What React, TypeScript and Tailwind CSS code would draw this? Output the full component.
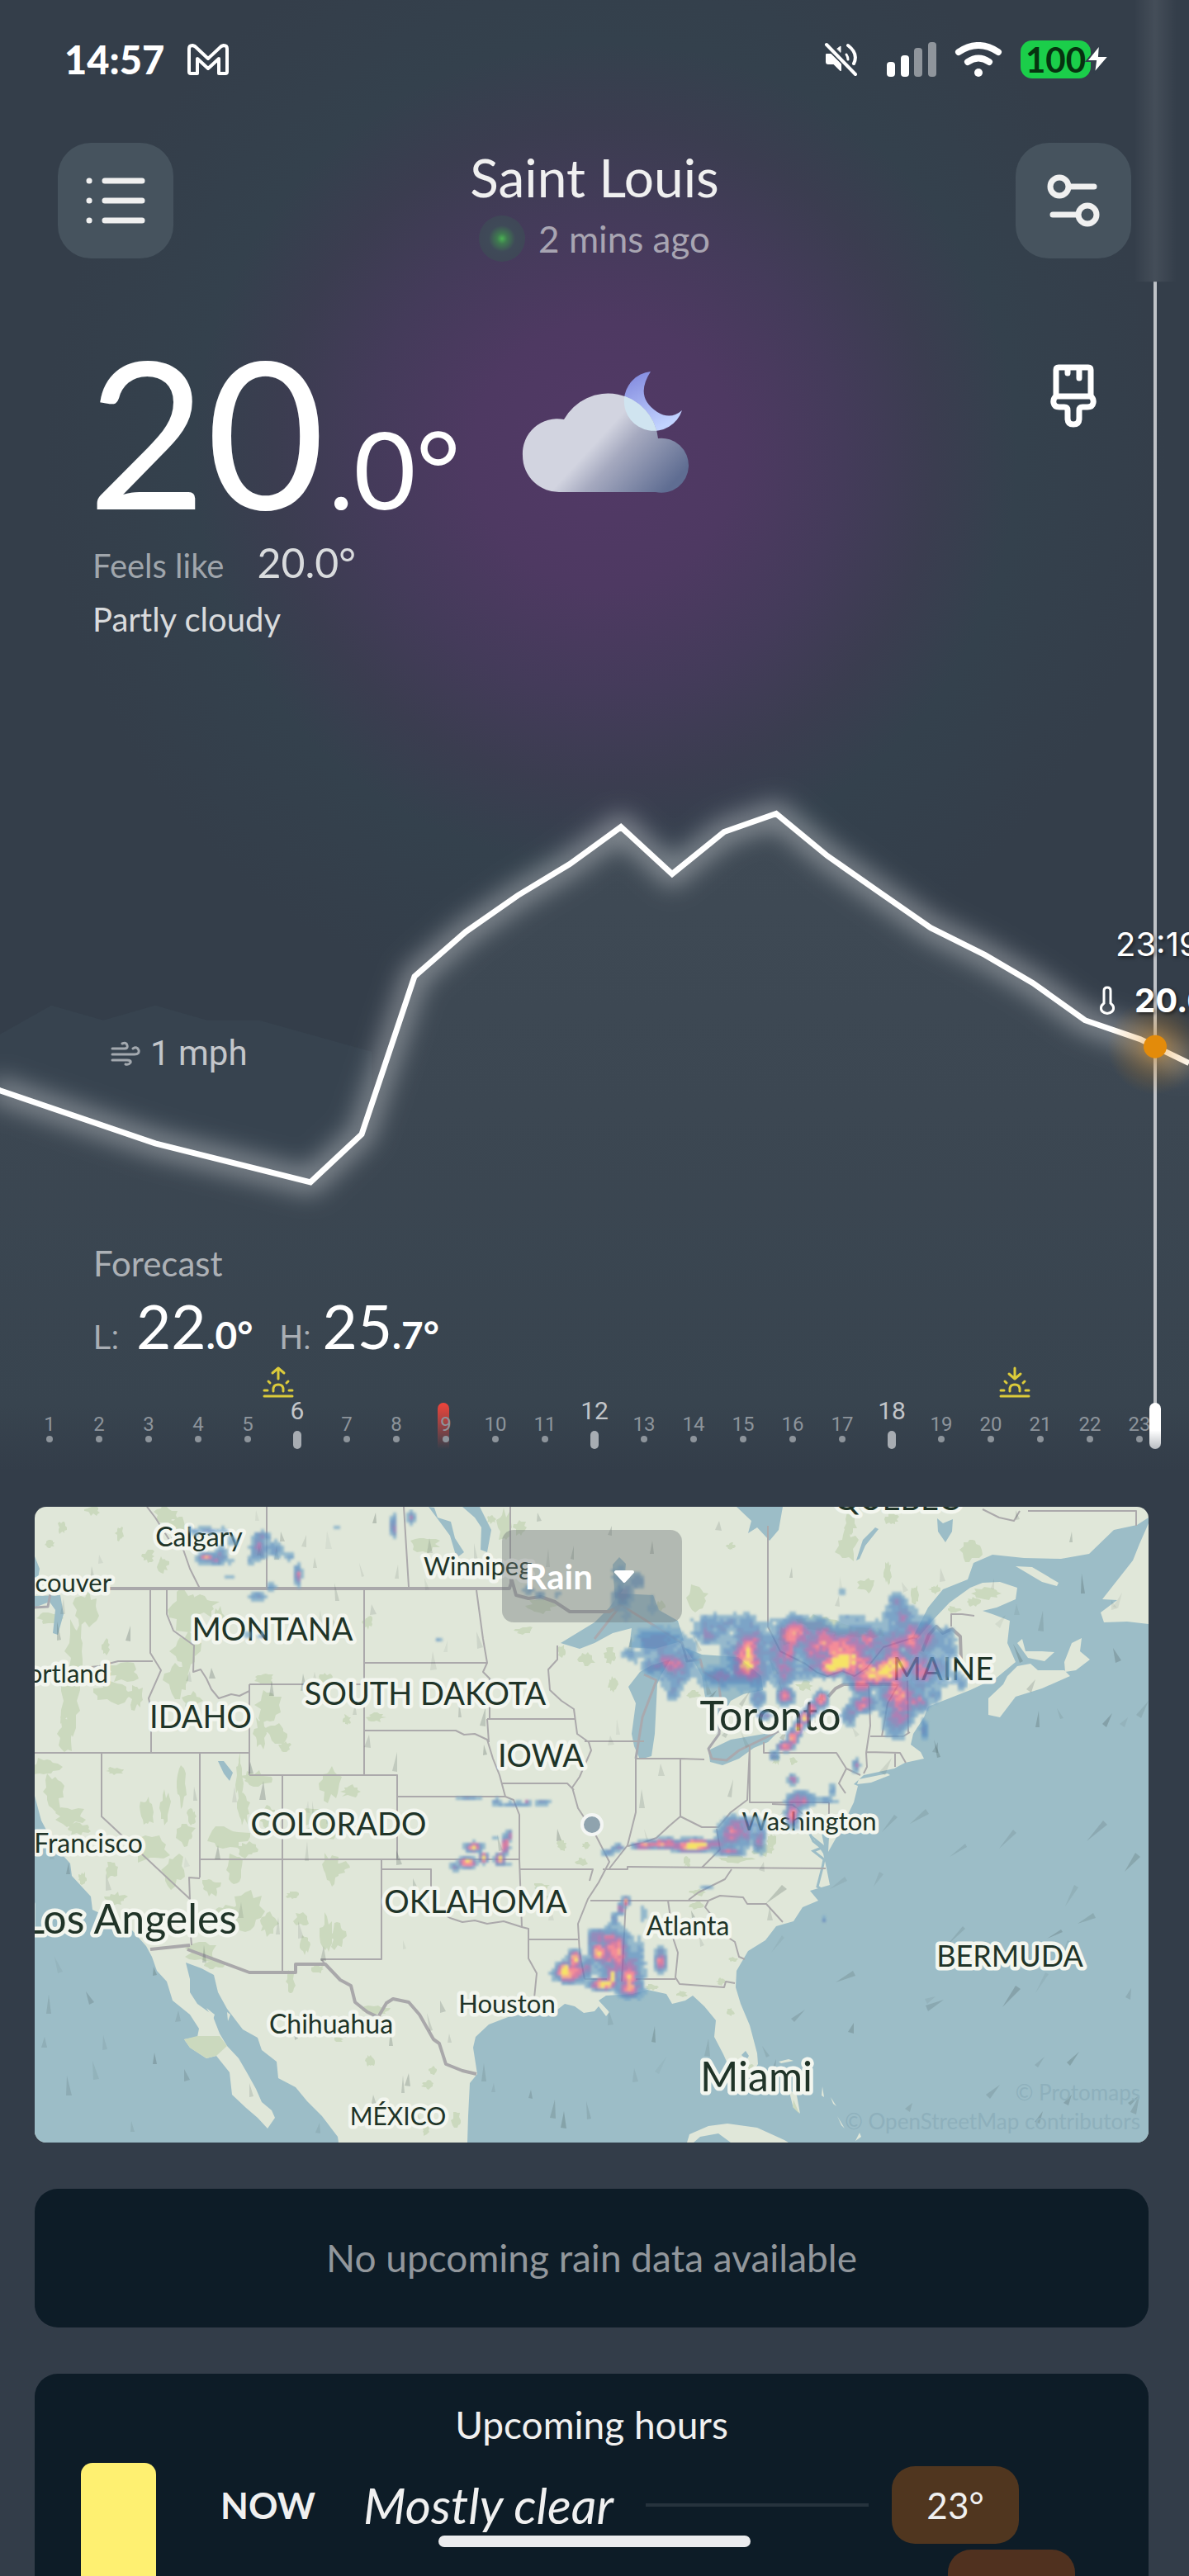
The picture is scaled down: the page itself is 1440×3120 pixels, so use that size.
import React from "react";

/* ---------- deterministic noise ---------- */
function seeded(seed: number) {
  let s = seed;
  return () => {
    s = (s * 1664525 + 1013904223) % 4294967296;
    return s / 4294967296;
  };
}

function hash(x: number, y: number) {
  const n = Math.sin(x * 127.1 + y * 311.7) * 43758.5453;
  return n - Math.floor(n);
}

function smoothNoise(x: number, y: number) {
  const x0 = Math.floor(x);
  const y0 = Math.floor(y);
  const fx = x - x0;
  const fy = y - y0;
  const top = hash(x0, y0) * (1 - fx) + hash(x0 + 1, y0) * fx;
  const bottom = hash(x0, y0 + 1) * (1 - fx) + hash(x0 + 1, y0 + 1) * fx;
  return top * (1 - fy) + bottom * fy;
}

type Five = [number, number, number, number, number];
type Four = [number, number, number, number];

/* ---------- rain radar ---------- */
const RAIN: Five[] = [
  [752, 1908, 16, 12, 0.4], [755, 1935, 14, 26, 0.42], [770, 1916, 12, 10, 0.4], [790, 1945, 7, 12, 0.35],
  [800, 1990, 34, 18, 0.45], [815, 2018, 18, 22, 0.66], [793, 2017, 14, 10, 0.6], [768, 2005, 15, 12, 0.36], [816, 2045, 8, 14, 0.45], [835, 2005, 12, 14, 0.45],
  [872, 1968, 34, 14, 0.45], [905, 2005, 22, 34, 0.8], [903, 2014, 14, 16, 0.85], [880, 2032, 34, 14, 0.48], [862, 1982, 10, 9, 0.62], [935, 2000, 12, 34, 0.42], [845, 1975, 12, 10, 0.4],
  [968, 1980, 26, 18, 0.72], [1000, 1992, 32, 20, 0.8], [1050, 1990, 48, 18, 0.78], [1030, 2013, 32, 13, 1.04], [1062, 2024, 30, 14, 1], [1010, 2018, 18, 10, 0.9], [1085, 2018, 18, 20, 0.88],
  [1112, 1988, 24, 22, 0.72], [1090, 1960, 20, 16, 0.48], [1086, 1940, 11, 12, 0.42], [1118, 2020, 26, 28, 0.62], [1088, 2055, 17, 34, 0.88], [1105, 1972, 16, 10, 0.6],
  [1046, 2064, 12, 10, 0.78], [1146, 1992, 16, 22, 0.42], [952, 2010, 14, 26, 0.72], [952, 2055, 9, 9, 0.85], [918, 2056, 9, 10, 0.6],
  [985, 2022, 22, 12, 0.5], [1119, 2095, 5, 12, 0.5], [1162, 2036, 12, 14, 0.4], [985, 1968, 22, 10, 0.45], [1032, 1960, 26, 4, 0.36], [1020, 1928, 7, 4, 0.36],
  [1110, 2062, 14, 10, 0.65], [1130, 2050, 10, 14, 0.45], [1028, 2078, 9, 12, 0.72], [1043, 2040, 10, 12, 0.8],
  [994, 2058, 7, 8, 0.9], [984, 2070, 6, 7, 0.98], [975, 2081, 5, 7, 1.05], [967, 2093, 5, 7, 1.1], [960, 2104, 5, 7, 1.1], [952, 2115, 8, 5, 0.95], [938, 2126, 6, 6, 0.5],
  [926, 2078, 6, 4, 0.85], [1037, 2138, 4, 8, 0.6], [960, 2156, 5, 5, 0.75],
  [970, 2180, 14, 8, 1.02], [960, 2196, 8, 14, 0.82], [1002, 2180, 16, 5, 0.45], [1008, 2168, 4, 9, 0.5],
  [738, 2244, 7, 5, 0.5], [748, 2238, 8, 4, 0.6], [780, 2235, 12, 4, 0.95], [808, 2233, 14, 5, 1.15], [836, 2235, 20, 6, 1.25], [866, 2234, 14, 6, 0.6],
  [890, 2220, 17, 16, 0.76], [884, 2243, 13, 5, 0.85], [920, 2226, 7, 18, 0.6], [902, 2208, 26, 8, 0.5], [855, 2286, 8, 3, 0.4],
  [758, 2303, 4, 5, 0.8], [752, 2312, 4, 6, 0.7], [743, 2325, 5, 9, 0.55], [732, 2347, 12, 10, 0.9], [744, 2368, 18, 26, 0.92], [724, 2364, 7, 10, 1.2], [740, 2355, 10, 18, 0.95],
  [762, 2390, 12, 20, 0.9], [730, 2403, 14, 6, 1.2], [742, 2393, 4, 10, 1.2], [762, 2408, 13, 9, 0.9], [776, 2375, 7, 28, 0.42], [800, 2374, 6, 12, 0.9], [775, 2416, 8, 8, 0.4],
  [692, 2390, 16, 10, 0.9], [684, 2389, 6, 9, 1.25], [712, 2384, 7, 14, 0.6], [716, 2350, 4, 12, 0.6], [696, 2372, 7, 9, 1], [779, 2316, 5, 12, 0.42],
  [574, 2237, 10, 5, 0.9], [586, 2250, 4, 5, 1], [566, 2256, 8, 5, 1.1], [550, 2262, 6, 5, 0.5], [612, 2236, 4, 10, 0.95], [606, 2252, 5, 6, 1.15], [600, 2226, 3, 4, 0.4], [612, 2259, 12, 3, 0.4], [617, 2222, 3, 6, 0.8],
  [570, 2178, 20, 3, 0.36], [622, 2185, 20, 3, 0.42], [657, 2183, 10, 4, 0.42], [638, 2182, 3, 3, 0.55], [600, 2182, 6, 4, 0.4],
  [250, 1854, 26, 5, 0.42], [260, 1888, 18, 8, 0.55], [250, 1886, 7, 4, 0.85], [268, 1882, 8, 7, 0.7], [313, 1878, 9, 13, 0.62], [282, 1868, 7, 8, 0.4],
  [317, 1861, 11, 6, 0.4], [335, 1876, 12, 12, 0.4], [361, 1908, 4, 11, 0.62], [328, 1922, 6, 5, 0.42], [313, 1934, 11, 6, 0.4], [303, 1890, 5, 5, 0.4],
  [278, 1909, 10, 2, 0.35], [350, 1885, 7, 6, 0.38], [477, 1850, 4, 14, 0.58], [498, 1838, 4, 8, 0.48], [406, 1850, 6, 2, 0.36],
  [300, 1980, 3, 6, 0.35], [532, 1986, 3, 3, 0.45], [640, 1926, 8, 6, 0.4], [655, 1932, 6, 4, 0.52], [675, 1931, 5, 4, 0.42], [317, 1981, 3, 3, 0.5], [998, 2325, 3, 3, 0.5],
];
const RAIN_COLORS = ["#7daac8", "#5b90c2", "#5f82ba", "#7a70b2", "#a05fa8", "#d65d90", "#fb7084", "#fd9e72", "#fde243"];
const CELL = 4;

function radarPaths(): string[] {
  const peak = new Map<number, number>();
  const W = 400;
  RAIN.forEach(([cx, cy, rx, ry, v]) => {
    const x0 = Math.floor((cx - rx * 1.6) / CELL);
    const x1 = Math.ceil((cx + rx * 1.6) / CELL);
    const y0 = Math.floor((cy - ry * 1.6) / CELL);
    const y1 = Math.ceil((cy + ry * 1.6) / CELL);
    for (let y = y0; y <= y1; y++)
      for (let x = x0; x <= x1; x++) {
        const dx = (x * CELL + 2 - cx) / rx;
        const dy = (y * CELL + 2 - cy) / ry;
        const g = v * Math.exp(-(dx * dx + dy * dy) * 0.6);
        const key = y * W + x;
        const old = peak.get(key) || 0;
        peak.set(key, Math.max(old, g) + Math.min(old, g) * 0.08);
      }
  });
  const paths = RAIN_COLORS.map(() => "");
  peak.forEach((v, key) => {
    const x = key % W;
    const y = Math.floor(key / W);
    const n = v * (0.5 + 0.7 * smoothNoise(x / 2.6, y / 3.4) + 0.3 * hash(x, y));
    if (n < 0.24) return;
    const i = Math.min(8, Math.floor((n - 0.24) * 9.6));
    paths[i] += `M${x * CELL} ${y * CELL}h${CELL}v${CELL}h-${CELL}z`;
  });
  return paths;
}

/* ---------- woodland patches ---------- */
const WOODS: Four[] = [
  [112, 1830, 9, 6], [145, 1857, 5, 10], [200, 1835, 14, 12], [215, 1855, 12, 20], [75, 1850, 6, 8], [60, 1870, 7, 5], [180, 1885, 8, 8], [196, 1895, 8, 10],
  [105, 1950, 18, 24], [60, 1960, 16, 8], [92, 2000, 12, 40], [85, 2060, 14, 40], [80, 2100, 12, 22], [150, 2025, 22, 12], [138, 2050, 26, 14], [165, 2055, 10, 16], [128, 1995, 6, 10],
  [225, 1950, 22, 26], [245, 1945, 20, 14], [225, 2000, 18, 26], [215, 2035, 16, 22], [232, 2060, 12, 12], [265, 1960, 8, 14], [325, 2065, 16, 26], [315, 2100, 8, 20], [335, 2100, 14, 12], [345, 2115, 8, 6],
  [320, 2033, 14, 8], [395, 2033, 9, 7], [445, 1965, 7, 8], [455, 2080, 12, 6], [420, 2083, 5, 7], [515, 1870, 18, 10], [612, 1850, 10, 22], [630, 1850, 8, 10], [595, 1840, 6, 6],
  [55, 2140, 20, 14], [65, 2170, 14, 22], [85, 2200, 20, 12], [95, 2215, 16, 8], [140, 2145, 12, 5], [178, 2195, 9, 18], [200, 2190, 7, 22], [220, 2165, 6, 24], [232, 2200, 6, 10],
  [290, 2150, 5, 30], [310, 2155, 20, 10], [295, 2190, 8, 20], [325, 2200, 12, 14], [400, 2160, 14, 22], [375, 2200, 30, 12], [395, 2215, 22, 18], [425, 2170, 12, 8],
  [180, 2240, 24, 18], [210, 2265, 14, 22], [225, 2220, 12, 16], [275, 2225, 26, 14], [285, 2265, 12, 20], [255, 2285, 12, 12], [300, 2240, 14, 10], [135, 2265, 10, 12], [140, 2300, 14, 8], [100, 2275, 6, 8],
  [400, 2265, 12, 22], [412, 2262, 12, 8], [355, 2295, 8, 5], [300, 2315, 20, 26], [325, 2330, 12, 14], [275, 2315, 16, 9], [395, 2345, 8, 26], [365, 2325, 12, 8], [410, 2345, 10, 18], [370, 2355, 7, 12],
  [245, 2365, 20, 12], [260, 2378, 12, 8], [385, 2385, 8, 6], [352, 2400, 6, 14], [455, 2435, 18, 7], [410, 2470, 6, 4], [448, 2496, 6, 8], [518, 2525, 8, 6], [524, 2508, 5, 6], [553, 2568, 7, 10], [516, 2580, 5, 7],
  [680, 2235, 7, 8], [705, 2255, 8, 5], [655, 2285, 10, 6], [655, 2300, 12, 5], [710, 2235, 5, 5], [635, 1975, 12, 5], [680, 2000, 5, 8], [710, 2010, 10, 9], [655, 1945, 18, 10],
  [845, 1935, 14, 16], [800, 1945, 7, 8], [885, 1873, 5, 5], [1026, 1872, 14, 20], [1030, 1845, 8, 18], [1080, 1840, 9, 8], [1176, 1877, 13, 16], [1050, 1920, 12, 10], [1075, 1905, 5, 14], [1108, 1932, 5, 12], [1132, 1925, 7, 6],
  [990, 1965, 26, 10], [1025, 1975, 30, 8], [1060, 1978, 14, 6], [950, 1982, 8, 12], [975, 2042, 12, 6], [738, 2005, 8, 10], [742, 2040, 6, 10], [840, 2052, 10, 5], [1195, 1930, 18, 8], [1180, 1940, 9, 6], [1155, 1950, 9, 5], [1306, 1992, 5, 8], [1208, 2062, 5, 7],
  [832, 2255, 5, 6], [890, 2252, 22, 5], [925, 2240, 14, 8], [935, 2230, 6, 8], [845, 2292, 10, 5], [842, 2308, 10, 5], [888, 2373, 6, 3], [873, 2400, 5, 5], [826, 2415, 7, 5], [790, 2407, 9, 4], [885, 2437, 5, 6], [906, 2506, 10, 8], [960, 2133, 5, 5], [940, 2132, 6, 6], [1364, 1900, 5, 8],
];
function woodPaths(): string {
  const r = seeded(7);
  return WOODS.map(([cx, cy, rx, ry]) => {
    const n = 18;
    let d = "";
    for (let i = 0; i < n; i++) {
      const a = (i / n) * Math.PI * 2;
      const k = 0.55 + r() * 0.6;
      d += `${i ? "L" : "M"}${(cx + Math.cos(a) * rx * k).toFixed(0)} ${(cy + Math.sin(a) * ry * k).toFixed(0)}`;
    }
    return d + "z";
  }).join("");
}

/* ---------- wind streaks ---------- */
function streaks() {
  const r = seeded(41);
  return Array.from({ length: 190 }, () => {
    const x = 50 + r() * 1330;
    const y = 1835 + r() * 750;
    let deg = 75 + r() * 25;
    let sign = -1;
    if (x > 940 && y > 2180) {
      deg = y > 2420 ? 105 + r() * 50 : 115 + r() * 40;
      if (y < 2420) sign = 1;
    } else if (x > 780) deg = 60 + r() * 70;
    else if (x < 320 && y > 2300) deg = 60 + r() * 35;
    const len = (x > 940 && y > 2180 && y < 2420 ? 18 : 10) + r() * 14;
    const a = (deg * Math.PI) / 180;
    const tip = sign * len;
    const w = 2 + r() * 2;
    const dx = Math.cos(a);
    const dy = Math.sin(a);
    return {
      d: `M${(x + dx * tip).toFixed(0)} ${(y + dy * tip).toFixed(0)}L${(x - dy * w).toFixed(0)} ${(y + dx * w).toFixed(0)}L${(x + dy * w).toFixed(0)} ${(y - dx * w).toFixed(0)}z`,
      o: 0.05 + r() * 0.2,
    };
  });
}

const RADAR = radarPaths();
const WOOD = woodPaths();
const STREAKS = streaks();

const OCEAN = [
  "M42 2175L50 2205 67 2237 85 2257 87 2272 110 2297 112 2313 138 2325 160 2338 177 2357 184 2370 190 2387 202 2400 209 2423 230 2440 241 2457 239 2467 223 2470 230 2480 250 2493 262 2490 278 2510 281 2537 298 2553 312 2565 324 2578 333 2565 329 2556 317 2546 310 2530 300 2512 289 2493 275 2478 266 2463 257 2440 239 2427 230 2413 230 2397 225 2377 244 2384 259 2392 264 2413 275 2433 294 2458 312 2468 317 2483 335 2497 337 2517 358 2528 372 2545 390 2563 409 2588 410 2595H42z",
  "M566 2595L567 2563 569 2523 578 2512 573 2480 576 2467 592 2452 618 2442 643 2438 670 2438 684 2427 696 2430 707 2438 720 2436 725 2430 734 2442 738 2437 725 2423 734 2417 766 2415 784 2410 807 2415 814 2427 830 2423 839 2417 853 2430 867 2447 865 2467 876 2488 880 2497 881 2517 900 2527 918 2500 917 2487 908 2453 897 2427 891 2407 892 2387 906 2363 927 2350 940 2333 961 2327 972 2310 991 2302 981 2290 1005 2283 1001 2263 997 2245 982 2222 998 2235 992 2205 1004 2225 1003 2243 1016 2220 1034 2183 1039 2163 1034 2161 1046 2150 1083 2142 1096 2135 1119 2130 1115 2122 1103 2113 1106 2100 1119 2080 1124 2067 1147 2058 1175 2047 1207 2032 1230 2013 1220 1990 1223 1963 1202 1955 1190 1951 1207 1947 1230 1937 1232 1923 1211 1916 1190 1917 1175 1923 1150 1941 1130 1962 1110 1986 1105 1984 1124 1947 1142 1925 1172 1913 1179 1893 1202 1883 1240 1887 1285 1888 1319 1882 1349 1853 1377 1847 1391 1838V2595z",
  "M679 1990L720 1965 738 1947 750 1930 791 1932 798 1950 821 1963 828 1987 793 1997 762 1995 765 1972 742 1978 720 1990 702 1997z",
  "M742 1895L750 1886 758 1894 755 1925 745 1940z",
  "M761 2043L775 2025 789 2017 812 2010 800 2030 796 2040 793 2100 789 2127 775 2131 768 2115 765 2100 770 2063z",
  "M828 1995L850 2004 894 2007 922 2030 924 2047 900 2052 885 2060 876 2077 868 2100 858 2077 853 2050 850 2030 839 2010z",
  "M858 2120L885 2107 920 2101 943 2097 930 2110 913 2117 895 2130 875 2138 860 2134z",
  "M892 1825H948L943 1853 932 1866 917 1850 906 1857 910 1842z",
  "M519 1825L526 1826 530 1838 546 1843 551 1863 562 1880 553 1887 545 1860 534 1845z",
  "M560 1825H581L595 1853 590 1880 582 1877 583 1850 575 1838z",
  "M264 2133L271 2133 282 2147 278 2157 271 2148z",
  "M42 1933L73 1932 77 1955 70 1980 64 1978 67 1950 60 1940 42 1947z",
  "M42 1885L48 1900 46 1912 52 1925 42 1920z",
  "M1135 1839L1142 1845 1154 1840 1153 1855 1145 1868 1136 1855z",
  "M1037 1890L1045 1865 1060 1850 1064 1852 1048 1872 1041 1888z",
  "M898 2489L903 2484 907 2490 904 2495z",
];
const ISLANDS = [
  "M1230 1897L1250 1898 1282 1917 1280 1921 1262 1916z",
  "M1391 1845L1380 1870 1372 1890 1335 1937 1353 1938 1333 1953 1337 1965 1365 1964 1391 1967z",
  "M1220 2030L1232 2018 1248 2015 1257 2023 1289 2023 1296 2030 1262 2045 1230 2055 1211 2080 1197 2077 1197 2057 1215 2040z",
  "M1289 2013L1298 1990 1310 1984 1308 2000 1320 2010 1303 2023 1290 2025z",
  "M1232 1990L1238 1985 1242 2000 1262 2000 1277 2001 1265 2012 1245 2008z",
  "M1040 2155L1075 2148 1078 2150 1055 2159 1038 2161z",
  "M832 2595L835 2585 858 2575 881 2572 917 2577 950 2592 955 2595H885L870 2584 848 2588 840 2595z",
  "M955 2530L965 2538 969 2560 960 2550z",
  "M943 2497L955 2494 961 2496 946 2499z",
  "M996 2527L998 2540 995 2538z",
  "M1006 2540L1013 2551 1009 2548z",
  "M1014 2563L1020 2573 1023 2578 1019 2574z",
  "M1041 2583L1043 2588 1036 2593z",
  "M250 2432L260 2440 258 2446z",
  "M275 2437L279 2440 276 2448z",
];
const STATES =
  "M323 1825V1924M489 1825L495 1922M618 1825V1920M178 1825L188 1838 205 1865 222 1877 230 1900 242 1924M182 1926V2002L195 2023 180 2057 183 2070V2123M202 1926V1955L210 1975 235 1993 234 2025 243 2022 250 2033 256 2046 265 2057 280 2052 290 2054 302 2048M302 2040V2150M302 2040H441M42 2123H302M441 1926V2150M302 2150H481V2176M481 2176H612M481 2176V2252M441 2014H590M577 1926L585 1985 590 2014 585 2025 593 2033V2082M590 2082H696M441 2096H552L562 2101 575 2100 590 2107 597 2130 605 2150 612 2176 622 2180 629 2198V2252L632 2334M590 2082L592 2110M607 2160H687L695 2168M675 1993V2010L664 2022 666 2047 680 2060 695 2070 699 2100 713 2110 716 2120 705 2145 702 2152 693 2165 700 2190 720 2220 738 2255 725 2280 712 2300 700 2330 702 2365 708 2397M708 2109H780M123 2123V2200L230 2300 229 2274 242 2275M242 2123V2274M230 2300V2332L232 2356M242 2252H629M342 2150V2389M462 2252V2373H389L394 2379M462 2264H522V2310L545 2323 560 2328 575 2326 590 2330 610 2327 632 2334 640 2336V2372L650 2390 647 2420M629 2264H718L714 2278M640 2349H700M715 2302H858M770 2130V2195L760 2235 738 2263M770 2130H824L853 2131M824 2130V2200L810 2212 795 2226 778 2232 760 2236M824 2200L850 2213 870 2213 885 2195 905 2180 908 2115V2183H1004M925 2110V2123H1013L1025 2142 1016 2160 1024 2172M1025 2142L1042 2150M1052 2040L1054 2090 1049 2123 1050 2140 1046 2148M1054 2103H1094L1102 2098M1050 2122L1090 2123 1097 2135M1084 2123V2140M1068 2103L1075 2063 1088 2040M1099 2035L1100 2100M930 1848V1970L945 2000 975 2015 990 2026 1002 2030 1020 2024 1035 2030 1050 2020 1070 1995 1108 1983M1190 1828L1210 1838 1228 1842 1235 1830M1245 1830H1376V1848M1152 1970V1955H1165L1180 1957M730 2264H760V2261L870 2262 1000 2263M886 2264L878 2276 862 2284 846 2292 834 2301M858 2302L872 2296 900 2298 905 2306H928L948 2328M858 2302L854 2310 866 2325 872 2340 890 2352 895 2370 902 2373M809 2302L816 2350 821 2365 818 2395 823 2403 877 2407 879 2400 890 2402M770 2397H818M758 2302L753 2400M708 2397H735M850 2262L872 2240 868 2215M935 2185L960 2186 975 2200 1004 2213V2183M90 2021L120 2018 143 2012H185";
const BORDERS =
  "M130 1924H617L620 1914 625 1932 640 1936 655 1934 672 1940 690 1952 720 1952 738 1952 752 1944M182 2361L230 2356M227 2361L302 2389H358V2379H394L412 2398 425 2405 430 2425 445 2437 458 2443 468 2426 476 2421 495 2425 508 2440 525 2470 532 2475 540 2500 560 2508 577 2512M1003 2055L1012 2045 1022 2040H1088M1117 2000L1125 1980 1134 1970 1142 1978 1153 1973 1163 1982 1164 2010";
const LAKE_BORDERS = "M752 1944L778 1960 826 1990 832 2012 848 2010 852 2025 870 2035 873 2060 871 2100 858 2118 862 2130 880 2132 895 2120 943 2097M752 1944L720 1985M770 2130L778 2080 795 2035 780 2028M42 1947L58 1946 61 1930";

const LABELS: { t: string; x: number; y: number; s: number; a?: "end" | "start" }[] = [
  { t: "MONTANA", x: 330, y: 1987, s: 38 },
  { t: "IDAHO", x: 243, y: 2093, s: 38 },
  { t: "SOUTH DAKOTA", x: 515, y: 2065, s: 38 },
  { t: "IOWA", x: 655, y: 2140, s: 38 },
  { t: "COLORADO", x: 410, y: 2223, s: 38 },
  { t: "OKLAHOMA", x: 576, y: 2317, s: 38 },
  { t: "MAINE", x: 1142, y: 2035, s: 38 },
  { t: "BERMUDA", x: 1223, y: 2382, s: 36 },
  { t: "QUÉBEC", x: 1086, y: 1829, s: 38 },
  { t: "MÉXICO", x: 482, y: 2574, s: 30 },
  { t: "Calgary", x: 241, y: 1873, s: 32 },
  { t: "Vancouver", x: 135, y: 1928, s: 31, a: "end" },
  { t: "Portland", x: 131, y: 2038, s: 31, a: "end" },
  { t: "Winnipeg", x: 513, y: 1908, s: 31, a: "start" },
  { t: "San Francisco", x: 173, y: 2244, s: 32, a: "end" },
  { t: "Washington", x: 980, y: 2217, s: 31 },
  { t: "Atlanta", x: 833, y: 2344, s: 32 },
  { t: "Houston", x: 614, y: 2438, s: 31 },
  { t: "Chihuahua", x: 401, y: 2463, s: 32 },
  { t: "Toronto", x: 933, y: 2096, s: 50 },
  { t: "Los Angeles", x: 287, y: 2342, s: 50, a: "end" },
  { t: "Miami", x: 916, y: 2533, s: 50 },
];

function RadarMap() {
  return (
    <svg viewBox="42 1825 1349 770" preserveAspectRatio="xMidYMid slice" className="block aspect-[1349/770] w-full bg-[#e0e7d9]" role="img" aria-label="Rain map of North America">
      <defs>
        <filter id="soft" x="0" y="0" width="1" height="1">
          <feGaussianBlur stdDeviation="1.5" />
        </filter>
      </defs>
      <path d={WOOD} fill="#cbd9be" />
      {OCEAN.map((d) => <path key={d} d={d} fill="#9cbdc7" />)}
      {ISLANDS.map((d) => <path key={d} d={d} fill="#e0e7d9" />)}
      <path d="M239 2466H266L275 2478 262 2490 250 2493 230 2480 223 2470z" fill="#cbd9be" />
      <path d="M961 2543L968 2560 960 2552z" fill="#cbd9be" />
      <path d="M978 2215L985 2230 995 2238 985 2242 998 2252 996 2262 990 2285 1001 2292" fill="none" stroke="#9cbdc7" strokeWidth="3" />
      <path d={STATES} fill="none" stroke="#aba9ab" strokeWidth="2" strokeLinejoin="round" />
      <path d={LAKE_BORDERS} fill="none" stroke="#a9a9ae" strokeWidth="3" strokeLinejoin="round" />
      <path d={BORDERS} fill="none" stroke="#a9a8aa" strokeWidth="4" strokeLinejoin="round" />
      {STREAKS.map((s, i) => <path key={i} d={s.d} fill="#3b4a48" opacity={s.o} />)}
      <g fill="#203428" stroke="#f3f6ef" strokeWidth="9" strokeLinejoin="round" paintOrder="stroke" fontFamily="Lato, sans-serif">
        {LABELS.map((l) => (
          <text key={l.t} x={l.x} y={l.y} fontSize={l.s} textAnchor={l.a || "middle"}>{l.t}</text>
        ))}
      </g>
      <g opacity="0.76" filter="url(#soft)">
        {RADAR.map((d, i) => <path key={i} d={d} fill={RAIN_COLORS[i]} />)}
      </g>
      <circle cx="717" cy="2210" r="12" fill="#8fa3ae" stroke="#f4f6f4" strokeWidth="4" />
    </svg>
  );
}

/* ---------- icons ---------- */
function MailGlyph() {
  return (
    <svg viewBox="0 0 50 40" className="h-10 w-[50px]" fill="none" stroke="#fff" strokeWidth="4" strokeLinejoin="round">
      <path d="M12 37H4Q2 37 2 35V7Q2 3 6 3L9 4 25 19 41 4 44 3Q48 3 48 7V35Q48 37 46 37H38V19L25 31 12 19z" />
    </svg>
  );
}
function MutedGlyph() {
  return (
    <svg viewBox="0 0 42 42" className="h-[42px] w-[42px]" fill="none" stroke="#fff" strokeWidth="4" strokeLinecap="round">
      <path d="M3 15H8L20 27V34L12 26H5Q3 26 3 24z" fill="#fff" strokeWidth="2" strokeLinejoin="round" />
      <path d="M16 8L20 5V12z" fill="#fff" strokeWidth="1" />
      <path d="M27 15Q29 18 29 21" strokeWidth="3" />
      <path d="M29 4Q42 14 36 26" />
      <path d="M3 3L38 39" strokeWidth="4" />
    </svg>
  );
}
function SignalGlyph() {
  return (
    <svg viewBox="0 0 60 42" className="h-[42px] w-[60px]" fill="#fff">
      <rect x="0" y="24" width="10" height="18" rx="4" />
      <rect x="17" y="16" width="10" height="26" rx="4" />
      <rect x="33" y="7" width="10" height="35" rx="4" opacity=".45" />
      <rect x="50" y="0" width="10" height="42" rx="4" opacity=".45" />
    </svg>
  );
}
function WifiGlyph() {
  return (
    <svg viewBox="0 0 58 42" className="h-[42px] w-[58px]" fill="none" stroke="#fff" strokeWidth="8" strokeLinecap="round">
      <path d="M5 12Q29 -4 53 12" />
      <path d="M16 24Q29 15 42 24" />
      <circle cx="29" cy="37" r="5" fill="#fff" stroke="none" />
    </svg>
  );
}
function ListGlyph() {
  return (
    <svg viewBox="0 0 72 60" className="h-[60px] w-[72px]" fill="none" stroke="#f0f0f0" strokeWidth="7" strokeLinecap="round">
      <path d="M23 6H68M23 30H68M23 54H68M4 6h.1M4 30h.1M4 54h.1" />
    </svg>
  );
}
function SlidersGlyph() {
  return (
    <svg viewBox="0 0 66 66" className="h-[66px] w-[66px]" fill="none" stroke="#f0f0f0" strokeWidth="7" strokeLinecap="round">
      <circle cx="16" cy="16" r="11" />
      <path d="M28 16H58M8 50H38" />
      <circle cx="50" cy="50" r="11" />
    </svg>
  );
}
function BrushGlyph() {
  return (
    <svg viewBox="0 0 56 78" className="h-[78px] w-14" fill="none" stroke="#fff" strokeWidth="7" strokeLinejoin="round" strokeLinecap="round">
      <path d="M7 39V7Q7 4 10 4H46Q49 4 49 7V39M21 6v5M35 6v11" />
      <path d="M7 39H49Q53 42 52 47Q51 52 45 52H39Q35 52 35 56V66Q35 73 28 73Q21 73 21 66V56Q21 52 17 52H11Q5 52 4 47Q3 42 7 39z" />
    </svg>
  );
}
function WindGlyph() {
  return (
    <svg viewBox="0 0 36 30" className="h-[30px] w-9" fill="none" stroke="#a3a9af" strokeWidth="3" strokeLinecap="round">
      <path d="M2 9H17Q21 9 20 5Q19 1 14 3M2 16H29Q35 16 34 11Q32 6 27 9M2 23H20Q25 23 24 26Q22 29 18 28" />
    </svg>
  );
}
function SunGlyph({ up }: { up?: boolean }) {
  return (
    <svg viewBox="0 0 38 38" className="h-[38px] w-[38px]" fill="none" stroke="#dccb3a" strokeWidth="3" strokeLinecap="round" strokeLinejoin="round">
      <path d="M2 36H36M2 29H6M32 29H36M7 18L9 20M31 18L29 20M13 30Q12 22 19 22Q26 22 25 30" />
      {up ? <path d="M19 15V2M12 8L19 2 26 8" /> : <path d="M19 2V15M12 9L19 15 26 9" />}
    </svg>
  );
}
const CLOUD = "M47 147A44 44 0 0 1 1 103A42 42 0 0 1 51 59A61 61 0 0 1 165 82A33 33 0 1 1 162 147z";
const MOON = "M156 1A36 36 0 1 0 194 48Q180 60 164 50Q136 32 156 1z";

function PartlyCloudyNight() {
  return (
    <svg viewBox="0 0 204 148" className="h-[148px] w-[204px]" role="img" aria-label="Partly cloudy night">
      <defs>
        <linearGradient id="cloud" x1="0" y1="0.3" x2="1" y2="0.85">
          <stop offset="0.42" stopColor="#d2d4e0" />
          <stop offset="0.58" stopColor="#a5a9bf" />
          <stop offset="0.95" stopColor="#5f6d92" />
        </linearGradient>
        <linearGradient id="moon" x1="0" y1="0" x2="0.5" y2="1">
          <stop offset="0" stopColor="#7d84dc" />
          <stop offset="1" stopColor="#c2d3ff" />
        </linearGradient>
        <clipPath id="cloudShape">
          <path d={CLOUD} />
        </clipPath>
      </defs>
      <path d={MOON} fill="url(#moon)" />
      <path d={CLOUD} fill="url(#cloud)" />
      <path d={MOON} fill="#d0e4f0" clipPath="url(#cloudShape)" />
    </svg>
  );
}

/* ---------- temperature chart ---------- */
const LINE = "M-10 1316L0 1320 188 1384 376 1431 438 1373 502 1182 564 1128 627 1084 690 1046 752 1001 814 1058 877 1007 940 985 1002 1036 1065 1080 1127 1123 1193 1156 1251 1190 1314 1235 1381 1258 1399 1267 1440 1287";

function TemperatureChart() {
  return (
    <svg viewBox="0 0 1440 1780" preserveAspectRatio="none" className="absolute inset-0 h-full w-full" aria-hidden="true">
      <defs>
        <linearGradient id="area" gradientUnits="userSpaceOnUse" x1="0" y1="980" x2="0" y2="1780">
          <stop offset="0" stopColor="#3f4a55" />
          <stop offset="0.45" stopColor="#3c4752" />
          <stop offset="0.9" stopColor="#38444f" />
          <stop offset="1" stopColor="#333d49" />
        </linearGradient>
        <filter id="glow" x="-5%" y="-20%" width="110%" height="140%">
          <feGaussianBlur stdDeviation="15" />
        </filter>
        <radialGradient id="amber">
          <stop offset="0" stopColor="#e48a0c" stopOpacity=".5" />
          <stop offset="0.4" stopColor="#e48a0c" stopOpacity=".24" />
          <stop offset="1" stopColor="#e48a0c" stopOpacity="0" />
        </radialGradient>
        <linearGradient id="strip">
          <stop offset="0" stopColor="#fff" stopOpacity="0" />
          <stop offset="0.5" stopColor="#fff" stopOpacity=".08" />
          <stop offset="1" stopColor="#fff" stopOpacity="0" />
        </linearGradient>
      </defs>
      <path d="M0 1252L62 1217 125 1235 188 1217 251 1235 314 1235 450 1273V1780H0z" fill="#37434f" />
      <path d={LINE + "V1780H-10z"} fill="url(#area)" />
      <path d={LINE} fill="none" stroke="#fff" strokeOpacity=".42" strokeWidth="26" filter="url(#glow)" />
      <path d={LINE} fill="none" stroke="#fff" strokeWidth="7" />
      <rect x="1373" y="0" width="52" height="341" fill="url(#strip)" />
      <rect x="1397" y="341" width="4" height="1360" fill="#bfc2c7" />
      <circle cx="1399" cy="1267" r="58" fill="url(#amber)" />
      <circle cx="1399" cy="1267" r="14" fill="#e38b0a" />
    </svg>
  );
}

function Extreme({ label, whole, part }: { label: string; whole: string; part: string }) {
  return (
    <div className="flex items-baseline">
      <dt className="w-[52px] font-[Roboto] text-[40px] text-[#a9aeb4]">{label}</dt>
      <dd className="flex items-baseline text-white">
        <span className="text-[73px] leading-[80px]">{whole}</span>
        <span className="text-[46px] font-bold">{part}</span>
      </dd>
    </div>
  );
}

function HourMark({ hour }: { hour: number }) {
  const major = hour % 6 === 0;
  return (
    <li className="flex flex-1 flex-col items-center">
      {major ? (
        <>
          <span className="text-[30px] leading-8 text-[#c3c6ca]">{hour}</span>
          <span className="mt-2 h-[22px] w-[10px] rounded-full bg-[#a7acb2]" />
        </>
      ) : (
        <>
          <span className="mt-5 text-[24px] leading-6 text-[#8d949b]">{hour}</span>
          <span className="mt-0.5 h-2 w-2 rounded-full bg-[#8d949b]" />
        </>
      )}
    </li>
  );
}

export default function App() {
  return (
    <div className="relative h-screen overflow-hidden bg-[#333d49] font-[Lato,sans-serif]">
      <section className="relative bg-[radial-gradient(circle_at_733px_550px,#523966_0,#4e3962_160px,#443b5a_290px,#3b3d50_400px,#34414d_500px,#343e4a_680px)] pb-[26px]">
        <TemperatureChart />
        <div className="relative">
          <div className="flex h-36 items-center justify-between pl-[78px] pr-[119px]">
            <div className="flex items-center gap-7">
              <span className="text-[47px] font-black text-white">14:57</span>
              <MailGlyph />
            </div>
            <div className="flex items-center">
              <MutedGlyph />
              <div className="ml-[34px]"><SignalGlyph /></div>
              <div className="ml-[22px]"><WifiGlyph /></div>
              <div className="relative ml-[22px] flex h-[46px] w-[85px] items-center rounded-[14px] bg-[#1bce4a] pl-[6px]">
                <span className="text-[42px] font-bold leading-none text-[#06330f]">100</span>
                <svg viewBox="0 0 32 36" className="absolute -right-6 top-[5px] h-9 w-8" fill="#fff" stroke="#333e4a" strokeWidth="2">
                  <path d="M19 0L3 20H14L12 35L30 14H18z" />
                </svg>
              </div>
            </div>
          </div>

          <header className="mt-[29px] flex h-[140px] justify-between px-[70px]">
            <button aria-label="Locations" className="flex w-[140px] items-center justify-center rounded-[40px] bg-[#46535e]"><ListGlyph /></button>
            <div className="pt-1 text-center">
              <h1 className="text-[64px] leading-[76px] text-[#f0f0f0]">Saint Louis</h1>
              <p className="flex items-center justify-center gap-4 text-[44px] leading-[72px] text-[#a8a5b2]">
                <span className="h-14 w-14 rounded-full bg-[radial-gradient(circle,#4bb253_0,#3f7a50_6px,#3f4a58_16px,#3f4757_28px)]" />
                2 mins ago
              </p>
            </div>
            <button aria-label="Settings" className="flex w-[140px] items-center justify-center rounded-[40px] bg-[#46535e]"><SlidersGlyph /></button>
          </header>

          <div className="mt-[88px] flex h-60 justify-between pl-[106px] pr-28">
            <div className="flex">
              <p className="flex w-[526px] items-baseline gap-1 text-white">
                <span className="text-[248px] leading-60">20</span>
                <span className="text-[130px]">.0°</span>
              </p>
              <div className="pt-12"><PartlyCloudyNight /></div>
            </div>
            <button aria-label="Appearance" className="mt-10 h-[78px]"><BrushGlyph /></button>
          </div>

          <div className="mt-2 pl-28">
            <p className="flex items-baseline gap-10 leading-[64px]">
              <span className="text-[40px] text-[#a0a6ac]">Feels like</span>
              <span className="text-[50px] text-[#d9dbdd]">20.0°</span>
            </p>
            <p className="text-[40px] leading-[66px] text-[#d9dbdd]">Partly cloudy</p>
          </div>

          <p className="mt-[467px] flex items-center gap-3 pl-[134px] font-[Roboto] text-[42px] leading-[52px] text-[#c3c6ca]">
            <WindGlyph />1 mph
          </p>

          <div className="mt-[200px] pl-[113px]">
            <h2 className="text-[42px] leading-[56px] text-[#adb1b6]">Forecast</h2>
            <dl className="mt-2 flex items-baseline gap-8">
              <Extreme label="L:" whole="22" part=".0°" />
              <Extreme label="H:" whole="25" part=".7°" />
            </dl>
          </div>

          <div className="relative mt-[42px]">
            <div className="absolute -top-[38px] left-[318px]"><SunGlyph up /></div>
            <div className="absolute -top-[38px] left-[1210px]"><SunGlyph /></div>
            <div className="absolute left-[530px] top-1.5 h-14 w-[14px] rounded-t-full bg-linear-to-b from-[#f0443a] to-transparent" />
            <ol className="relative flex px-[30px] font-[Roboto]">
              {Array.from({ length: 23 }, (_, i) => <HourMark key={i} hour={i + 1} />)}
            </ol>
            <div className="absolute left-[1392px] top-1.5 h-14 w-[14px] rounded-full bg-linear-to-b from-white from-60% to-[#b9bdc2]" />
          </div>
        </div>

        <div className="absolute left-[1332px] top-[1116px] whitespace-nowrap font-[Inter] text-[40px] leading-[56px] text-white [text-shadow:2px_2px_4px_#0008]">
          <p className="pl-[19px]">23:19</p>
          <p className="mt-3 flex items-center gap-6 font-bold">
            <svg viewBox="0 0 18 36" className="h-9 w-[18px]" fill="none" stroke="#fff" strokeWidth="3">
              <path d="M5 21V6Q5 2 9 2Q13 2 13 6V21Q19 26 15 31Q9 36 3 31Q-1 26 5 21z" />
            </svg>
            20.6°
          </p>
        </div>
      </section>

      <main className="mt-[44px] flex flex-col gap-14 pl-[42px] pr-[49px]">
        <section className="relative overflow-hidden rounded-[14px]">
          <RadarMap />
          <div className="absolute inset-x-0 top-7 flex justify-center">
            <div className="relative">
              <select aria-label="Map layer" defaultValue="Rain" className="h-28 w-[218px] appearance-none rounded-[14px] bg-[#6e7577]/40 pl-7 text-[42px] font-bold text-white">
                <option>Rain</option>
                <option>Wind</option>
              </select>
              <svg viewBox="0 0 26 17" className="pointer-events-none absolute right-[57px] top-12 h-[17px] w-[26px]" fill="#fff" stroke="#fff" strokeWidth="4" strokeLinejoin="round">
                <path d="M3 3H23L13 14z" />
              </svg>
            </div>
          </div>
          <p className="absolute bottom-2 right-[10px] flex flex-col items-end text-[26px] leading-[35px] text-[#8eb0bc]">
            <a href="#protomaps">© Protomaps</a>
            <a href="#osm">© OpenStreetMap contributors</a>
          </p>
        </section>

        <section className="rounded-[28px] bg-[#0d1c27] px-8 py-[54px] text-center text-[46px] leading-[60px] text-[#92979c]">
          No upcoming rain data available
        </section>

        <section className="rounded-t-[28px] bg-[#0d1c27] px-14 pb-40 pt-8">
          <h2 className="text-center text-[46px] leading-[60px] text-[#f0f0f0]">Upcoming hours</h2>
          <div className="mt-4 flex">
            <div className="w-[91px] shrink-0 rounded-t-[14px] bg-[#fef071]" />
            <ul className="flex grow flex-col gap-[7px] pl-[78px] text-[#f0f0f0]">
              <li className="mt-1 flex h-[94px] items-center pr-[101px]">
                <span className="w-[173px] shrink-0 text-[44px] font-bold">NOW</span>
                <span className="shrink-0 text-[60px] italic">Mostly clear</span>
                <span className="ml-[39px] mr-[28px] h-1 grow bg-[#26333d]" />
                <span className="flex h-[94px] w-[154px] shrink-0 items-center justify-center rounded-[28px] bg-[#50361f] text-[44px]">23°</span>
              </li>
              <li className="flex h-[94px] justify-end pr-[33px]">
                <span className="h-[94px] w-[154px] rounded-[28px] bg-[#50311f]" />
              </li>
            </ul>
          </div>
        </section>
      </main>

      <div className="absolute bottom-[35px] left-1/2 h-[14px] w-[378px] -translate-x-1/2 rounded-full bg-[#ebecee]" />
    </div>
  );
}
